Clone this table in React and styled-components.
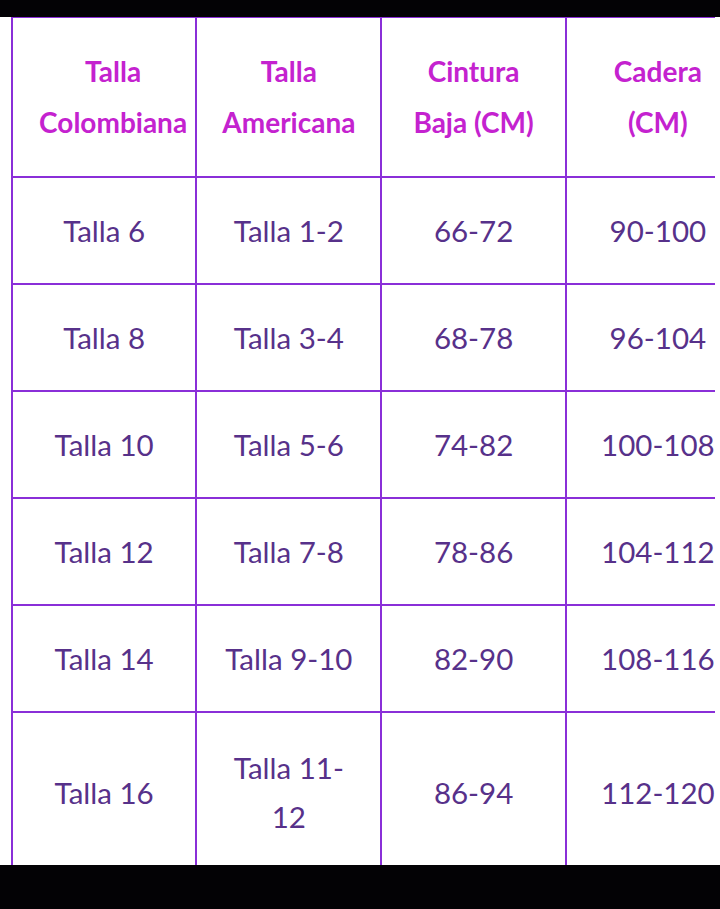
import React from "react";
import styled, { createGlobalStyle } from "styled-components";

const Global = createGlobalStyle`
  html, body { margin: 0; padding: 0; background: #ffffff; }
  body { font-family: Lato, "Open Sans", sans-serif; }
`;

const Page = styled.div`
  width: 720px;
  height: 909px;
  display: flex;
  flex-direction: column;
  background: #ffffff;
  overflow: hidden;
`;

const BlackBar = styled.div`
  flex: 0 0 ${(p) => p.h}px;
  background: #030205;
`;

const Viewport = styled.div`
  flex: 1 1 auto;
  width: 715px;
  padding-left: 11px;
  box-sizing: border-box;
  overflow: hidden;
`;

const Table = styled.table`
  border-collapse: collapse;
  table-layout: fixed;
  width: 740px;
  margin-top: -1px;
`;

const Col = styled.col`
  width: ${(p) => p.w}px;
`;

const Row = styled.tr`
  height: ${(p) => p.h}px;
`;

const Head = styled.th`
  border: 2px solid #8a2fd8;
  color: #c422cf;
  font-weight: 700;
  font-size: 28px;
  line-height: 51px;
  text-align: center;
  vertical-align: middle;
  padding: 0 0 0 ${(p) => (p.shift ? 18 : 0)}px;
  white-space: pre-line;
`;

const Cell = styled.td`
  border: 2px solid #8a2fd8;
  color: #57318a;
  font-weight: 400;
  font-size: 29.5px;
  line-height: 49px;
  text-align: center;
  vertical-align: middle;
  padding: 0 8px;
`;

const headers = [
  "Talla\nColombiana",
  "Talla\nAmericana",
  "Cintura\nBaja (CM)",
  "Cadera\n(CM)",
];

const rows = [
  ["Talla 6", "Talla 1-2", "66-72", "90-100"],
  ["Talla 8", "Talla 3-4", "68-78", "96-104"],
  ["Talla 10", "Talla 5-6", "74-82", "100-108"],
  ["Talla 12", "Talla 7-8", "78-86", "104-112"],
  ["Talla 14", "Talla 9-10", "82-90", "108-116"],
  ["Talla 16", "Talla 11-12", "86-94", "112-120"],
];

export default function App() {
  return (
    <Page>
      <Global />
      <BlackBar h={17} />
      <Viewport>
        <Table>
          <colgroup>
            <Col w={184} />
            <Col w={185} />
            <Col w={184} />
            <Col w={184} />
          </colgroup>
          <thead>
            <Row h={160}>
              {headers.map((h, i) => (
                <Head key={h} shift={i === 0}>
                  {h}
                </Head>
              ))}
            </Row>
          </thead>
          <tbody>
            {rows.map((r, i) => (
              <Row key={r[0]} h={i === rows.length - 1 ? 160 : 107}>
                {r.map((c, j) => (
                  <Cell key={j}>
                    {c === "Talla 11-12" ? (
                      <>
                        Talla 11-
                        <br />
                        12
                      </>
                    ) : (
                      c
                    )}
                  </Cell>
                ))}
              </Row>
            ))}
          </tbody>
        </Table>
      </Viewport>
      <BlackBar h={44} />
    </Page>
  );
}
